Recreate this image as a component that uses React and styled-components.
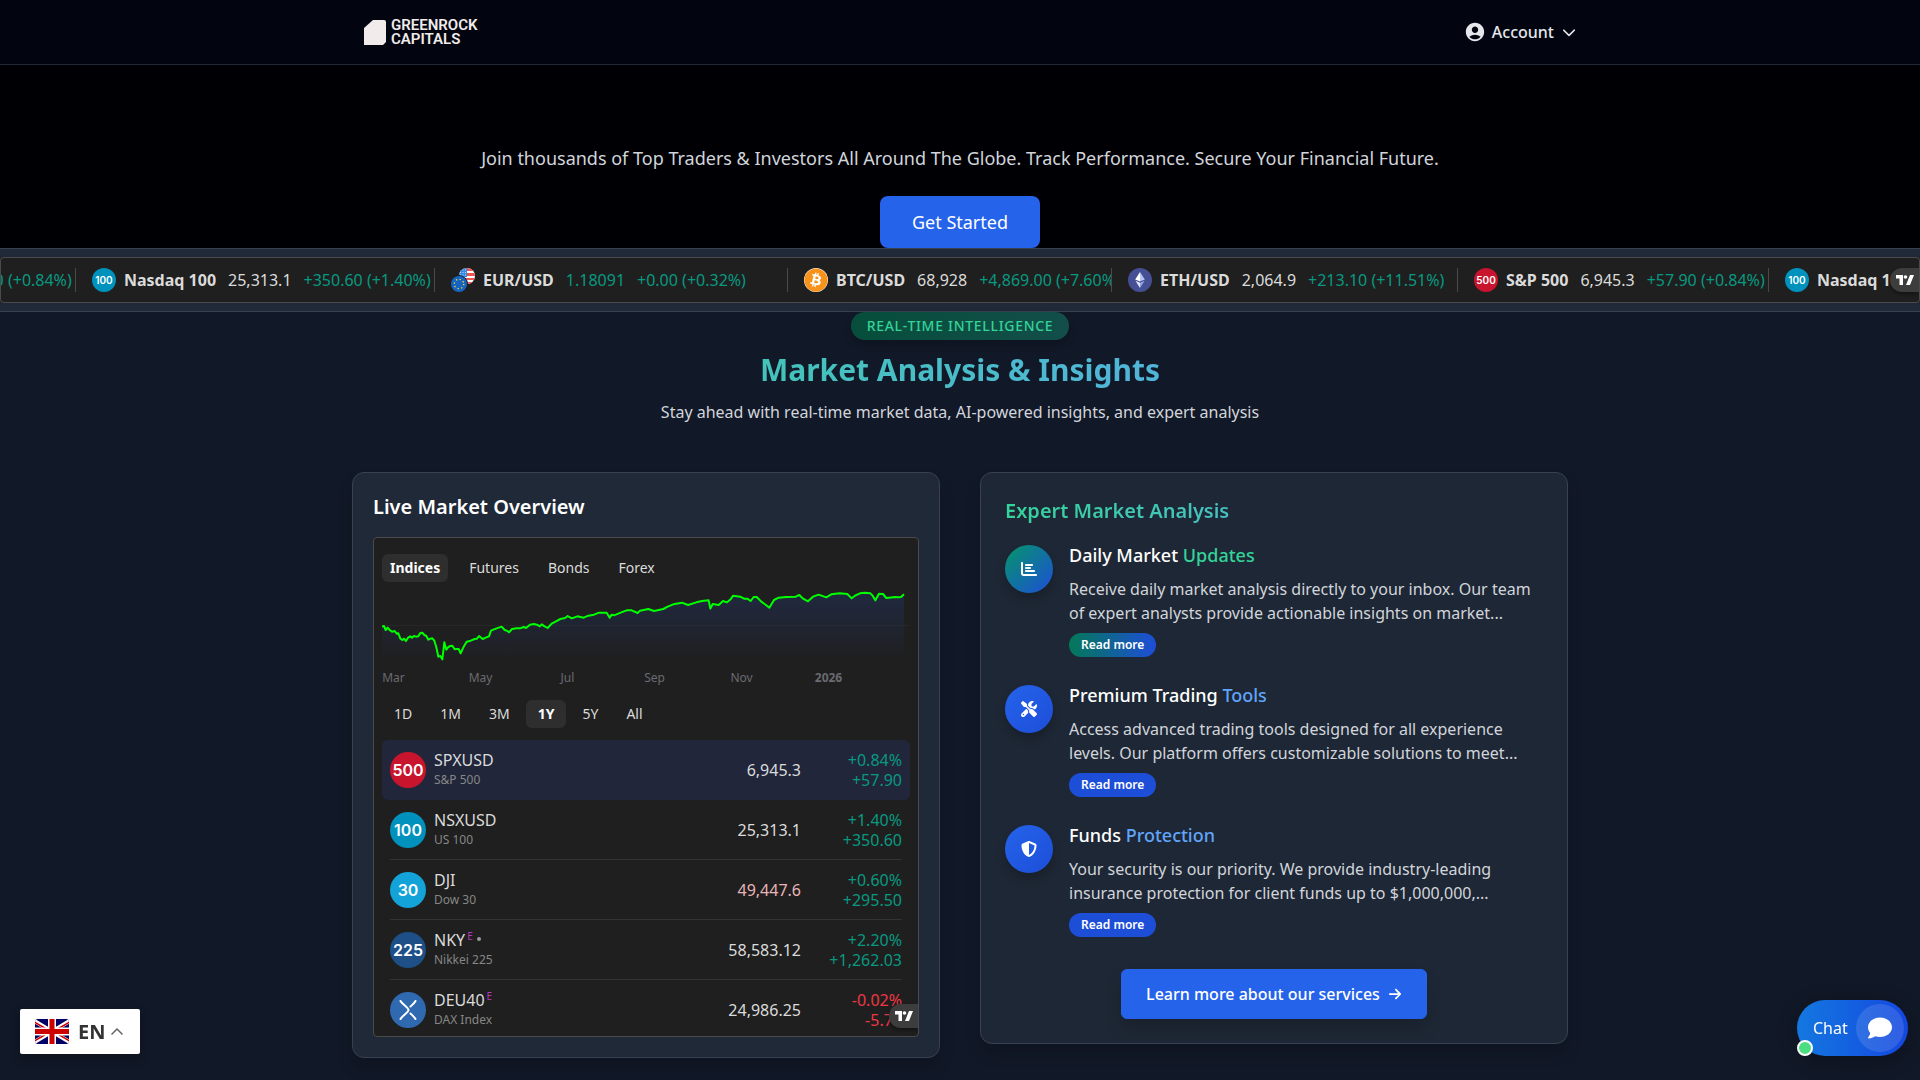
import React from "react";
import styled, { createGlobalStyle, css } from "styled-components";
import { FaChartBar, FaScrewdriverWrench, FaShieldHalved, FaArrowRight, FaChevronDown, FaComment, FaBitcoin } from "react-icons/fa6";
import { MdAccountCircle } from "react-icons/md";

const GlobalStyle = createGlobalStyle`
  *, *::before, *::after { box-sizing: border-box; }
  body {
    margin: 0;
    min-height: 100vh;
    background: #111827;
    color: #fff;
    font: 400 16px/24px "Noto Sans", "Open Sans", sans-serif;
  }
  h1, h2, h3, p, ul { margin: 0; padding: 0; }
  ul { list-style: none; }
  button { font: inherit; color: inherit; border: 0; padding: 0; background: none; cursor: pointer; }
  a { color: inherit; text-decoration: none; }
  svg { display: block; }
`;

/* ---------- Header ---------- */

const Header = styled.header`
  background: #02050f;
  border-bottom: 1px solid #1f2937;
`;

const HeaderInner = styled.div`
  display: flex;
  align-items: center;
  justify-content: space-between;
  max-width: 1232px;
  height: 64px;
  margin: 0 auto;
  padding-left: 20px;
`;

const Logo = styled.a`
  display: flex;
  align-items: center;
  gap: 4px;
  color: #f1ebeb;
  font: 600 15px/14px Roboto, "Liberation Sans", sans-serif;
`;

const LogoName = styled.span`
  display: flex;
  flex-direction: column;
`;

const AccountButton = styled.button`
  display: flex;
  align-items: center;
  gap: 8px;
  color: #e5e7eb;
  font-weight: 500;
`;

const AccountLabel = styled.span`
  display: flex;
  align-items: center;
  gap: 6px;
`;

/* ---------- Hero ---------- */

const Hero = styled.section`
  display: flex;
  flex-direction: column;
  align-items: center;
  gap: 24px;
  padding: 79px 16px 0;
  background: #000004;
  text-align: center;
`;

const HeroText = styled.p`
  color: #d1d5db;
  font-size: 18px;
  line-height: 28px;
`;

const HeroButton = styled.a`
  padding: 12px 32px;
  border-radius: 8px;
  background: #2563eb;
  font-size: 18px;
  line-height: 28px;
`;

/* ---------- Ticker ---------- */

const TickerBand = styled.section`
  padding: 8px 0;
  background: #1f2937;
  border: solid #374151;
  border-width: 1px 0;
`;

const TickerFrame = styled.div`
  position: relative;
  overflow: hidden;
  border: 1px solid #4a4a4a;
  border-radius: 4px;
  background: #1f1f1f;
`;

const TickerTrack = styled.ul`
  display: flex;
  align-items: center;
  height: 44px;
`;

const TickerItem = styled.li`
  display: flex;
  flex: none;
  align-items: center;
  width: ${(p) => p.$width}px;
  height: 24px;
  padding-left: 16px;
  border-left: 1px solid #4a4a4a;
  overflow: hidden;
  white-space: nowrap;
  color: ${(p) => (p.$up ? "#089981" : "#dbdbdb")};
`;

const TickerName = styled.strong`
  margin: 0 12px 0 8px;
  color: #dbdbdb;
`;

const TickerChange = styled.span`
  margin-left: 12px;
  color: #089981;
`;

const RoundBadge = styled.span`
  display: flex;
  flex: none;
  align-items: center;
  justify-content: center;
  width: ${(p) => p.$size}px;
  height: ${(p) => p.$size}px;
  border-radius: 50%;
  background: ${(p) => p.$color};
  color: #fff;
  font: 600 ${(p) => (p.$size > 24 ? 16 : 10)}px/1 Inter, sans-serif;
`;

const CoinIcon = styled.span`
  flex: none;
  width: 24px;
  height: 24px;
  border-radius: 50%;
  background: #fff;
  color: #f7931a;
`;

const Attribution = styled.a`
  position: absolute;
  right: 0;
  bottom: ${(p) => p.$bottom}px;
  display: flex;
  align-items: center;
  width: 29px;
  height: 24px;
  padding-left: 6px;
  border-radius: 12px 0 0 12px;
  background: #3d3d3d;
  box-shadow: 0 2px 4px rgba(0, 0, 0, 0.4);
`;

/* ---------- Market section ---------- */

const Market = styled.main`
  display: flex;
  flex-direction: column;
  max-width: 1280px;
  margin: 0 auto;
  padding: 0 32px 20px;
`;

const Pill = styled.span`
  align-self: center;
  margin-bottom: 12px;
  padding: 4px 16px;
  border-radius: 14px;
  background: linear-gradient(90deg, #064e3b, #134e4a);
  box-shadow: 0 4px 8px rgba(0, 0, 0, 0.2);
  color: #34d399;
  font-size: 14px;
  font-weight: 500;
  line-height: 20px;
  letter-spacing: 0.05em;
  text-transform: uppercase;
`;

const gradientText = css`
  background: linear-gradient(90deg, #34d399, #60a5fa);
  background-clip: text;
  -webkit-background-clip: text;
  color: transparent;
`;

const Title = styled.h1`
  ${gradientText}
  font-size: 30px;
  font-weight: 700;
  line-height: 36px;
  text-align: center;
`;

const Subtitle = styled.p`
  margin: 12px 0 48px;
  color: #d1d5db;
  text-align: center;
`;

const Columns = styled.div`
  display: grid;
  grid-template-columns: repeat(2, minmax(0, 1fr));
  align-items: start;
  gap: 40px;
`;

const Card = styled.section`
  padding: ${(p) => p.$pad}px;
  border: 1px solid #374151;
  border-radius: 12px;
  background: ${(p) => p.$bg};
  box-shadow: 0 10px 15px rgba(0, 0, 0, 0.15);
`;

const CardTitle = styled.h2`
  margin-bottom: 16px;
  font-size: 20px;
  font-weight: 600;
  line-height: 28px;
  ${(p) => p.$gradient && gradientText}
`;

/* ---------- Live overview widget ---------- */

const Widget = styled.div`
  position: relative;
  height: 500px;
  padding: 16px 8px 0;
  overflow: hidden;
  border: 1px solid #4a4a4a;
  border-radius: 4px;
  background: #1f1f1f;
  color: #dbdbdb;
`;

const Tabs = styled.div`
  display: flex;
  gap: ${(p) => p.$gap}px;
`;

const Tab = styled.button`
  padding: 4px ${(p) => p.$pad}px;
  border-radius: 6px;
  font-size: 14px;
  line-height: 20px;
  ${(p) => p.$active && "background: #2e2e2e; color: #fff; font-weight: 700;"}
`;

const Chart = styled.svg`
  width: 100%;
  height: 80px;
  margin-top: 8px;
`;

const Months = styled.div`
  display: flex;
  margin: 0 0 14px -32px;
  color: #6a6a72;
  font-size: 12px;
  line-height: 16px;
`;

const Month = styled.span`
  width: 87px;
  text-align: center;
  font-weight: ${(p) => (p.$bold ? 700 : 400)};
`;

const Quotes = styled.table`
  display: block;
  margin-top: 12px;
`;

const QuoteBody = styled.tbody`
  display: block;
`;

const QuoteRow = styled.tr`
  display: grid;
  grid-template-columns: 36px 1fr auto 101px;
  align-items: center;
  height: 60px;
  padding: 0 8px;
  border-radius: 6px;
  background: ${(p) => (p.$active ? "#21263b" : "linear-gradient(#333, #333) center bottom / calc(100% - 16px) 1px no-repeat")};
`;

const Cell = styled.td`
  padding: 0;
  line-height: 20px;
  text-align: right;
  color: ${(p) => p.$color || "inherit"};
`;

const NameCell = styled.th`
  padding: 0 0 0 8px;
  font-weight: 400;
  line-height: 20px;
  text-align: left;
`;

const Line = styled.span`
  display: block;
`;

const Company = styled.span`
  display: block;
  color: #868686;
  font-size: 12px;
`;

const Flag = styled.sup`
  margin-left: 2px;
  color: #b03ac0;
  font-size: 10px;
  line-height: 0;
`;

const Dot = styled.span`
  display: inline-block;
  width: 4px;
  height: 4px;
  margin: 0 0 5px 4px;
  border-radius: 50%;
  background: #9a9a9a;
`;

/* ---------- Expert analysis ---------- */

const Features = styled.ul`
  display: grid;
  gap: 24px;
`;

const Feature = styled.li`
  display: flex;
  align-items: flex-start;
  gap: 16px;
`;

const FeatureIcon = styled.span`
  display: flex;
  flex: none;
  align-items: center;
  justify-content: center;
  width: 48px;
  height: 48px;
  margin-top: 4px;
  border-radius: 50%;
  background: linear-gradient(135deg, ${(p) => p.$from}, #1d4ed8);
  box-shadow: 0 6px 10px rgba(0, 0, 0, 0.2);
`;

const FeatureTitle = styled.h3`
  font-size: 18px;
  font-weight: 500;
  line-height: 28px;
`;

const Accent = styled.span`
  color: ${(p) => p.$color};
`;

const FeatureText = styled.p`
  margin: 8px 0;
  color: #d1d5db;
`;

const ReadMore = styled.button`
  display: block;
  padding: 4px 12px;
  border-radius: 12px;
  background: linear-gradient(90deg, ${(p) => p.$from}, #1d4ed8);
  font-size: 12px;
  font-weight: 600;
  line-height: 16px;
`;

const LearnMore = styled.a`
  display: flex;
  align-items: center;
  gap: 8px;
  width: fit-content;
  margin: 32px auto 0;
  padding: 12px 24px;
  border: 1px solid #2563eb;
  border-radius: 6px;
  background: #2563eb;
  box-shadow: 0 10px 15px rgba(0, 0, 0, 0.15);
  font-weight: 500;
`;

/* ---------- Floating controls ---------- */

const Language = styled.button`
  position: fixed;
  left: 20px;
  bottom: 26px;
  display: flex;
  align-items: center;
  width: 120px;
  height: 45px;
  padding-left: 15px !important;
  border-radius: 2px;
  background: #fff !important;
  box-shadow: 0 4px 12px rgba(0, 0, 0, 0.3);
  color: #333 !important;
  font-size: 20px !important;
  font-weight: 700 !important;
`;

const LanguageCode = styled.span`
  margin: 0 6px 0 9px;
`;

const Chat = styled.button`
  position: fixed;
  right: 12px;
  bottom: 24px;
  display: flex;
  align-items: center;
  justify-content: space-between;
  width: 111px;
  height: 56px;
  padding: 0 4px 0 16px !important;
  border-radius: 28px;
  background: linear-gradient(90deg, #1478e0, #1447e0) !important;
  box-shadow: 0 4px 20px rgba(0, 0, 0, 0.3);
  color: #fff !important;
`;

const ChatBubble = styled.span`
  display: flex;
  align-items: center;
  justify-content: center;
  width: 48px;
  height: 48px;
  border-radius: 50%;
  background: rgba(255, 255, 255, 0.12);
`;

const Online = styled.span`
  position: absolute;
  left: 0;
  bottom: 0;
  width: 16px;
  height: 16px;
  border: 2px solid #fff;
  border-radius: 50%;
  background: #4ade80;
`;

/* ---------- Drawings ---------- */

const TradingViewMark = () => (
  <svg width="18" height="10" viewBox="0 0 36 20" fill="#fff" aria-hidden="true">
    <path d="M0 0h14v20H7V7H0z" />
    <circle cx="19" cy="4" r="3.6" />
    <path d="M28 0h8l-8 20h-8z" />
  </svg>
);

const EuroDollar = () => (
  <svg width="24" height="24" viewBox="0 0 24 24" aria-hidden="true">
    <defs>
      <clipPath id="usd"><circle cx="16" cy="8" r="8" /></clipPath>
    </defs>
    <g clipPath="url(#usd)">
      <path fill="#fff" d="M8 0h16v16H8z" />
      <path fill="#ef5350" d="M8 0h16v3H8zM8 5h16v3H8zM8 10h16v2H8zM8 14h16v2H8z" />
      <path fill="#2f8ae8" d="M8 0h8v9H8z" />
      <path stroke="#bcdcff" strokeDasharray="1 1.5" d="M9 2h7M9 4.500h7M9 7h7" />
    </g>
    <circle cx="8" cy="16" r="9" fill="#1f1f1f" />
    <circle cx="8" cy="16" r="8" fill="#1565c0" />
    <circle cx="8" cy="16" r="4.700" fill="none" stroke="#ffd735" strokeWidth="1.300" strokeDasharray="1.300 2.390" />
  </svg>
);

const Ether = () => (
  <svg width="24" height="24" viewBox="0 0 24 24" aria-hidden="true">
    <circle cx="12" cy="12" r="12" fill="#454f93" />
    <path fill="#fff" d="M12 4v9.600l-4.800-2z" />
    <path fill="#b5c3f5" d="M12 4v9.600l4.800-2z" />
    <path fill="#dfe5fb" d="M12 14.800v5.200l-4.600-7.200z" />
    <path fill="#94a7ec" d="M12 14.800v5.200l4.600-7.200z" />
  </svg>
);

const DaxMark = () => (
  <svg width="36" height="36" viewBox="0 0 36 36" fill="none" stroke="#fff" strokeWidth="2" strokeLinecap="round" aria-hidden="true">
    <path d="M10.500 9C12 12 18.500 15.500 18.500 18S12 24 10.500 27" />
    <path d="M25.500 9C24.500 11 22 13 20.500 14.500M25.500 27C24.500 25 22 23 20.500 21.500" />
  </svg>
);

const UnionJack = () => (
  <svg width="34" height="25" viewBox="0 0 34 25" aria-hidden="true">
    <defs>
      <clipPath id="uk"><rect width="34" height="25" rx="3" /></clipPath>
    </defs>
    <g clipPath="url(#uk)">
      <path fill="#006" d="M0 0h34v25H0z" />
      <path stroke="#fff" strokeWidth="4" d="M-4 0l42 25M38 0L-4 25" />
      <path stroke="#c00" strokeWidth="1.500" d="M-4 1l17 10M38 24L21 14M38 1L21 11M-4 24l17-10" />
      <path stroke="#fff" strokeWidth="8" d="M17 0v25M0 12.500h34" />
      <path stroke="#c00" strokeWidth="5" d="M17 0v25M0 12.500h34" />
    </g>
  </svg>
);

/* ---------- Data ---------- */

const badges = {
  sp: { color: "#c8152d", label: "500" },
  nasdaq: { color: "#0092bc", label: "100" },
  dow: { color: "#13a3d8", label: "30" },
  nikkei: { color: "#1e4f87", label: "225" },
  dax: { color: "#2f69b0", label: <DaxMark /> },
};

const IndexBadge = ({ kind, size }) => (
  <RoundBadge $size={size} $color={badges[kind].color}>{badges[kind].label}</RoundBadge>
);

const tickerItems = [
  { icon: <IndexBadge kind="sp" size={24} />, name: "S&P 500", price: "6,945.3", change: "+57.90 (+0.84%)", width: 311 },
  { icon: <IndexBadge kind="nasdaq" size={24} />, name: "Nasdaq 100", price: "25,313.1", change: "+350.60 (+1.40%)", width: 359 },
  { icon: <EuroDollar />, name: "EUR/USD", price: "1.18091", change: "+0.00 (+0.32%)", width: 353, up: true },
  { icon: <CoinIcon><FaBitcoin size={24} /></CoinIcon>, name: "BTC/USD", price: "68,928", change: "+4,869.00 (+7.60%)", width: 324 },
  { icon: <Ether />, name: "ETH/USD", price: "2,064.9", change: "+213.10 (+11.51%)", width: 346 },
  { icon: <IndexBadge kind="sp" size={24} />, name: "S&P 500", price: "6,945.3", change: "+57.90 (+0.84%)", width: 311 },
  { icon: <IndexBadge kind="nasdaq" size={24} />, name: "Nasdaq 100", price: "25,313.1", change: "+350.60 (+1.40%)", width: 359 },
];

const scrolled = 237;

const linePoints =
  "36,170 42,168 47,180 53,173 59,180 66,185 74,183 80,191 85,190 91,206 97,210 102,206 108,213 114,203 121,199 126,203 132,198 138,200 145,199 151,189 157,188 163,195 169,198 175,209 181,206 187,205 193,212 199,232 205,260 211,258 217,268 223,217 229,239 235,231 241,228 247,227 254,238 260,237 266,237 272,250 281,230 290,215 302,212 314,207 321,206 327,198 338,207 349,202 357,199 363,182 370,179 380,175 395,170 404,180 411,182 417,187 426,177 440,175 450,175 461,171 468,174 480,164 492,162 503,165 509,169 515,163 524,169 533,174 545,161 558,154 571,147 585,144 593,138 605,145 622,139 641,143 655,137 672,134 687,128 710,128 719,143 725,134 732,136 752,128 770,121 785,121 803,129 810,122 835,117 852,123 880,117 893,110 910,103 936,98 954,105 979,97 996,93 1016,91 1021,116 1028,102 1046,105 1059,93 1071,97 1082,88 1089,77 1111,80 1122,86 1132,86 1142,93 1151,81 1160,81 1174,95 1188,105 1198,113 1212,90 1226,83 1249,81 1277,80 1288,75 1298,85 1314,94 1329,80 1346,74 1369,82 1384,73 1409,70 1432,72 1445,85 1455,77 1470,70 1484,68 1501,70 1508,77 1516,91 1527,71 1539,72 1549,84 1576,81 1585,82 1593,81 1602,73";

const quotes = [
  { kind: "sp", symbol: "SPXUSD", company: "S&P 500", price: "6,945.3", pct: "+0.84%", diff: "+57.90", active: true },
  { kind: "nasdaq", symbol: "NSXUSD", company: "US 100", price: "25,313.1", pct: "+1.40%", diff: "+350.60" },
  { kind: "dow", symbol: "DJI", company: "Dow 30", price: "49,447.6", priceColor: "#e8b4b8", pct: "+0.60%", diff: "+295.50" },
  { kind: "nikkei", symbol: "NKY", company: "Nikkei 225", price: "58,583.12", pct: "+2.20%", diff: "+1,262.03", eod: true, closed: true },
  { kind: "dax", symbol: "DEU40", company: "DAX Index", price: "24,986.25", pct: "-0.02%", diff: "-5.72", eod: true, down: true },
];

const features = [
  {
    icon: <FaChartBar size={16} />, title: "Daily Market", accent: "Updates", accentColor: "#34d399", from: "#059669", buttonFrom: "#047857",
    lines: ["Receive daily market analysis directly to your inbox. Our team", "of expert analysts provide actionable insights on market..."],
  },
  {
    icon: <FaScrewdriverWrench size={16} />, title: "Premium Trading", accent: "Tools", accentColor: "#60a5fa", from: "#2563eb", buttonFrom: "#1d4ed8",
    lines: ["Access advanced trading tools designed for all experience", "levels. Our platform offers customizable solutions to meet..."],
  },
  {
    icon: <FaShieldHalved size={16} />, title: "Funds", accent: "Protection", accentColor: "#60a5fa", from: "#2563eb", buttonFrom: "#1d4ed8",
    lines: ["Your security is our priority. We provide industry-leading", "insurance protection for client funds up to $1,000,000,..."],
  },
];

/* ---------- Page ---------- */

const Ticker = () => (
  <TickerBand>
    <TickerFrame>
      <TickerTrack style={{ marginLeft: -scrolled }}>
        {tickerItems.map((t, i) => (
          <TickerItem key={i} $width={t.width} $up={t.up}>
            {t.icon}
            <TickerName>{t.name}</TickerName>
            <span>{t.price}</span>
            <TickerChange>{t.change}</TickerChange>
          </TickerItem>
        ))}
      </TickerTrack>
      <Attribution href="#" aria-label="TradingView" $bottom={10}><TradingViewMark /></Attribution>
    </TickerFrame>
  </TickerBand>
);

const PriceChart = () => (
  <Chart viewBox="36 60 1584 240" preserveAspectRatio="none" aria-label="S&P 500, one year">
    <defs>
      <linearGradient id="area" x1="0" y1="0" x2="0" y2="1">
        <stop offset="0" stopColor="#2962ff" stopOpacity="0.15" />
        <stop offset="1" stopColor="#2962ff" stopOpacity="0" />
      </linearGradient>
    </defs>
    <path d="M36 166.500h1584" stroke="#272727" strokeWidth="3" />
    <polygon points={`36,275 ${linePoints} 1602,275`} fill="url(#area)" />
    <polyline points={linePoints} fill="none" stroke="#00ff00" strokeWidth="2" strokeLinejoin="round" vectorEffect="non-scaling-stroke" />
  </Chart>
);

export default function App() {
  return (
    <>
      <GlobalStyle />
      <Header>
        <HeaderInner>
          <Logo href="#">
            <svg width="23" height="25" viewBox="0 0 23 25" fill="currentColor" aria-hidden="true">
              <path d="M9 0h11q2 0 2 2v20l-3 3H0V8z" />
            </svg>
            <LogoName>
              <span>GREENROCK</span>
              <span>CAPITALS</span>
            </LogoName>
          </Logo>
          <AccountButton>
            <AccountLabel>
              <MdAccountCircle size={22} />
              Account
            </AccountLabel>
            <FaChevronDown size={14} />
          </AccountButton>
        </HeaderInner>
      </Header>

      <Hero>
        <HeroText>Join thousands of Top Traders &amp; Investors All Around The Globe. Track Performance. Secure Your Financial Future.</HeroText>
        <HeroButton href="#">Get Started</HeroButton>
      </Hero>

      <Ticker />

      <Market>
        <Pill>Real-Time Intelligence</Pill>
        <Title>Market Analysis &amp; Insights</Title>
        <Subtitle>Stay ahead with real-time market data, AI-powered insights, and expert analysis</Subtitle>

        <Columns>
          <Card $pad={20} $bg="#1f2937">
            <CardTitle>Live Market Overview</CardTitle>
            <Widget>
              <Tabs $gap={13}>
                {["Indices", "Futures", "Bonds", "Forex"].map((t, i) => (
                  <Tab key={t} $pad={8} $active={i === 0}>{t}</Tab>
                ))}
              </Tabs>
              <PriceChart />
              <Months>
                {["Mar", "May", "Jul", "Sep", "Nov", "2026"].map((m) => (
                  <Month key={m} $bold={m === "2026"}>{m}</Month>
                ))}
              </Months>
              <Tabs $gap={4}>
                {["1D", "1M", "3M", "1Y", "5Y", "All"].map((t) => (
                  <Tab key={t} $pad={12} $active={t === "1Y"}>{t}</Tab>
                ))}
              </Tabs>
              <Quotes>
                <QuoteBody>
                  {quotes.map((q) => (
                    <QuoteRow key={q.symbol} $active={q.active}>
                      <Cell><IndexBadge kind={q.kind} size={36} /></Cell>
                      <NameCell scope="row">
                        <Line>{q.symbol}{q.eod && <Flag>E</Flag>}{q.closed && <Dot />}</Line>
                        <Company>{q.company}</Company>
                      </NameCell>
                      <Cell $color={q.priceColor}>{q.price}</Cell>
                      <Cell $color={q.down ? "#f23645" : "#089981"}>
                        <Line>{q.pct}</Line>
                        <Line>{q.diff}</Line>
                      </Cell>
                    </QuoteRow>
                  ))}
                </QuoteBody>
              </Quotes>
              <Attribution href="#" aria-label="TradingView" $bottom={8}><TradingViewMark /></Attribution>
            </Widget>
          </Card>

          <Card $pad={24} $bg="#1e2735">
            <CardTitle $gradient>Expert Market Analysis</CardTitle>
            <Features>
              {features.map((f) => (
                <Feature key={f.title}>
                  <FeatureIcon $from={f.from}>{f.icon}</FeatureIcon>
                  <div>
                    <FeatureTitle>{f.title} <Accent $color={f.accentColor}>{f.accent}</Accent></FeatureTitle>
                    <FeatureText>{f.lines[0]}<br />{f.lines[1]}</FeatureText>
                    <ReadMore $from={f.buttonFrom}>Read more</ReadMore>
                  </div>
                </Feature>
              ))}
            </Features>
            <LearnMore href="#">Learn more about our services <FaArrowRight size={14} /></LearnMore>
          </Card>
        </Columns>
      </Market>

      <Language>
        <UnionJack />
        <LanguageCode>EN</LanguageCode>
        <svg width="12" height="7" viewBox="0 0 12 7" fill="none" stroke="#666" strokeWidth="1.500" aria-hidden="true">
          <path d="M.5 6.500L6 1l5.500 5.500" />
        </svg>
      </Language>

      <Chat>
        Chat
        <ChatBubble><FaComment size={24} /></ChatBubble>
        <Online />
      </Chat>
    </>
  );
}
